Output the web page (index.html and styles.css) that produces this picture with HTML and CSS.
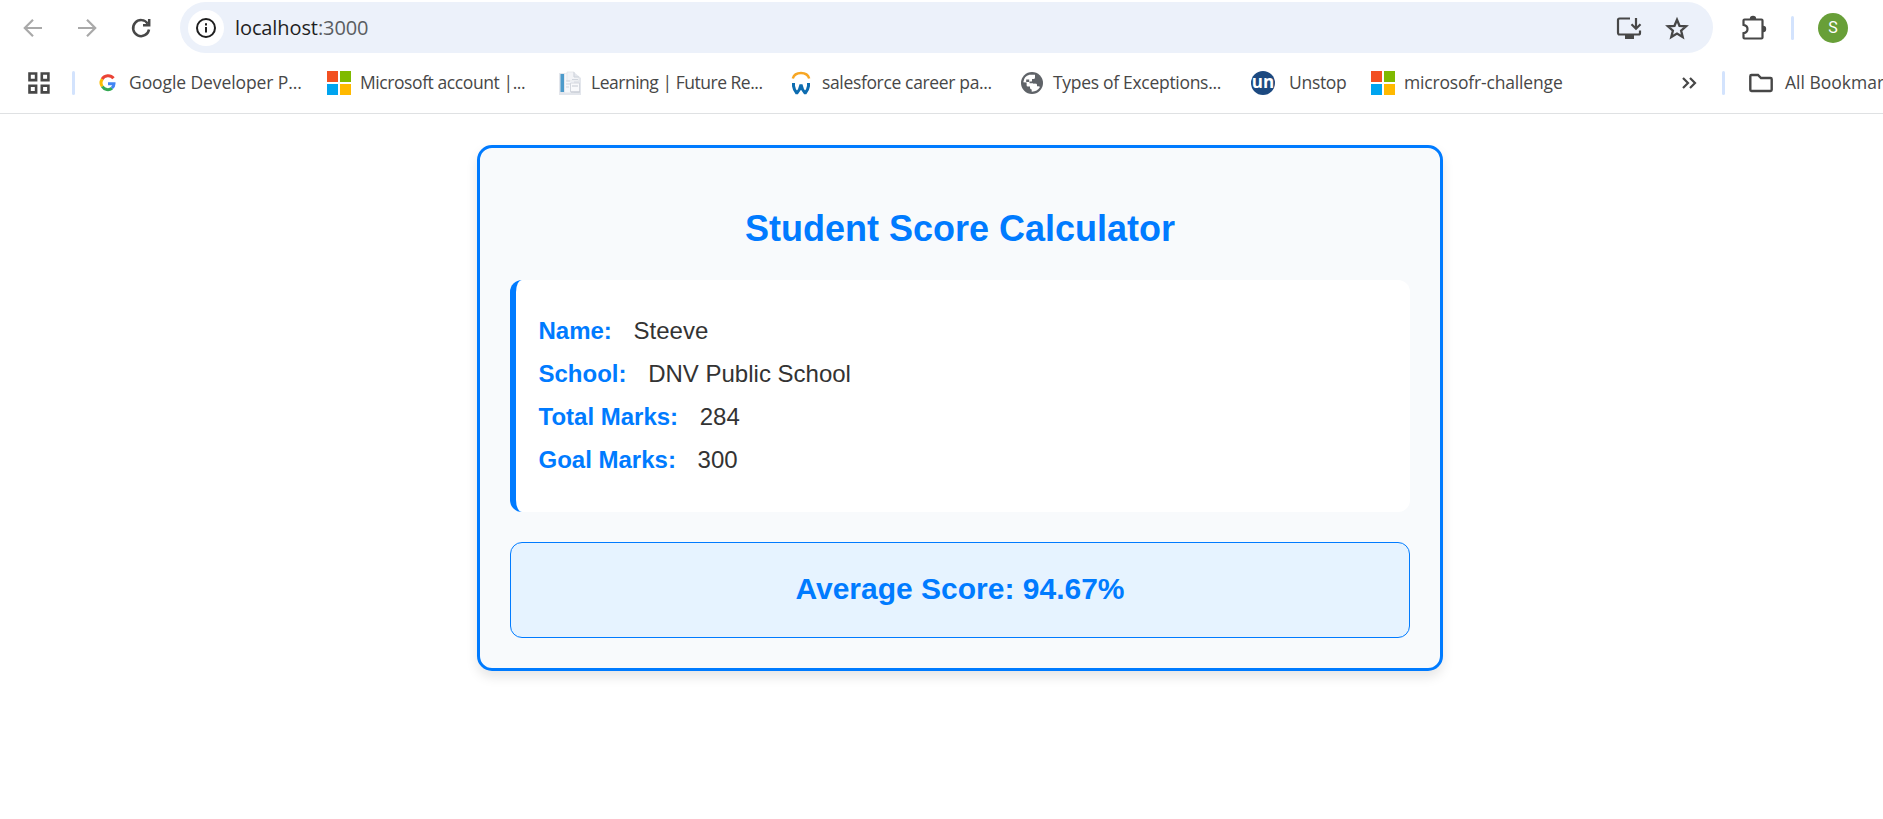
FILE: index.html
```html
<!DOCTYPE html>
<html lang="en">
<head>
<meta charset="utf-8">
<title>Student Score Calculator</title>
<link rel="stylesheet" href="styles.css">
</head>
<body>
<header class="browser">
  <div class="toolbar">
    <svg class="nav-icon nav-off" viewBox="0 0 24 24"><path d="M21 12H4.5M12 3.8 3.8 12l8.200 8.200"/></svg>
    <svg class="nav-icon nav-off" viewBox="0 0 24 24"><path d="M3 12h16.500M12 3.800 20.200 12 12 20.200"/></svg>
    <svg class="nav-icon nav-on" viewBox="0 0 24 24"><path d="M18.800 7.700A8 8 0 1 0 20 13.500"/><path d="M20.200 3v6.200h-6.200"/></svg>
    <div class="omnibox">
      <span class="site-info"><svg width="20" height="20" viewBox="0 0 20 20"><circle cx="10" cy="10" r="9" fill="none" stroke="#1f1f1f" stroke-width="2"/><path d="M10 9v5.500M10 5.200v2.200" stroke="#1f1f1f" stroke-width="2"/></svg></span>
      <span class="url">localhost<span class="port">:3000</span></span>
      <svg class="install" width="26" height="24" viewBox="0 0 26 24" fill="none" stroke="#474747" stroke-width="2.200"><path d="M14 2.500H3.500Q2 2.500 2 4v12.500Q2 18.500 3.500 18.500h19q1.500 0 1.500-1.500v-2.500"/><path d="M9 21h9" stroke-width="4"/><path d="M20 2v10.500M15.500 8.200l4.500 4.500 4.500-4.500"/></svg>
      <svg class="star" width="24" height="24" viewBox="0 0 24 24" fill="none" stroke="#474747" stroke-width="2.300"><path d="m12 3.700 2.500 6.100 6.600.5-5 4.300 1.600 6.500L12 17.600l-5.700 3.500 1.600-6.500-5-4.300 6.600-.5z"/></svg>
    </div>
    <svg class="puzzle" width="26" height="26" viewBox="0 0 26 26"><path d="M3.500 4.500h17q1 0 1 1v17q0 1-1 1h-17q-1 0-1-1v-4.300q4-.7 4-4.200t-4-4.200V5.500q0-1 1-1z" fill="none" stroke="#474747" stroke-width="2.200"/><path d="M8.800 4a3.200 3.200 0 0 1 6.400 0zM22 10.800a3.200 3.200 0 0 1 0 6.400z" fill="#474747"/></svg>
    <i class="divider div-top"></i>
    <span class="avatar">S</span>
  </div>
  <nav class="bookmarks">
    <svg class="apps" width="24" height="24" viewBox="0 0 24 24" fill="none" stroke="#474747" stroke-width="2.600"><path d="M2.500 2.500h6.600v6.600H2.500zM14.800 2.500h6.600v6.600h-6.600zM2.500 14.800h6.600v6.600H2.500zM14.800 14.800h6.600v6.600h-6.600z"/></svg>
    <i class="divider div-apps"></i>
    <a class="bookmark b-google"><svg viewBox="0 0 24 24" fill="none" stroke-width="3"><path d="M18.500 7.300A7 7 0 0 0 7 8.200" stroke="#ea4335"/><path d="M7.300 8.200a6.300 6.300 0 0 0 0 7.300" stroke="#fbbc04"/><path d="M7.300 15.500a6.600 6.600 0 0 0 9.700 1.700" stroke="#34a853"/><path d="M16.800 17.200q2.200-1.800 2.200-4.500h-6" stroke="#4285f4"/></svg><span>Google Developer P...</span></a>
    <a class="bookmark b-ms"><svg viewBox="0 0 24 24"><path fill="#f25022" d="M0 0h11v11H0z"/><path fill="#7fba00" d="M13 0h11v11H13z"/><path fill="#00a4ef" d="M0 13h11v11H0z"/><path fill="#ffb900" d="M13 13h11v11H13z"/></svg><span>Microsoft account |...</span></a>
    <a class="bookmark b-learning"><svg viewBox="0 0 24 24"><path d="M1 2h16l6 5v17H1z" fill="#e3e6ec"/><path d="M2.500 3H6v18H2.500z" fill="#4c9bcb"/><path d="M7 2.500h9v19H7z" fill="#f6f8fb"/><path d="M9 1h7v5h5v4H9z" fill="#f3f4f7" stroke="#dfe2e7" stroke-width=".7"/><path d="M16 1v5h5M8 10h4M8 13h4M8 16h3M14 8.500h6" stroke="#d0d5dd" fill="none"/><path d="M12.500 12h9v9h-9z" fill="#f8f9fb" stroke="#d3d7de"/><path d="M14 15h6M13 21h9" stroke="#c4c9d2"/></svg><span>Learning | Future Re...</span></a>
    <a class="bookmark b-sales"><svg viewBox="0 0 24 24" fill="none"><path d="M3.800 7.500C6 .2 18 .2 20.200 7.500" stroke="#f7a623" stroke-width="2.500"/><path d="M4.500 12v3q.5 4 3.300 7.300Q11 19 12 13.500q1 5.500 4.200 8.800 2.800-3.300 3.300-7.300v-3" stroke="#0d6cb0" stroke-width="3" stroke-linejoin="bevel"/></svg><span>salesforce career pa...</span></a>
    <a class="bookmark b-types"><svg viewBox="0 0 24 24"><circle cx="12" cy="12" r="11" fill="#5f6368"/><path fill="#fff" d="M3.300 11.200Q4 5 9.500 3.700L15 3.800v2.700q0 1.500-1.500 1.500H12v1.700q0 .9-1 .9H9.500v1.700h6q1.500 0 1.500 1.500v1.500h1.500q1 0 1.500.8-2.800 4.700-8.300 4.600v-2.200q-1.700 0-1.700-1.700v-1.300H7.800q-1.200 0-1.200-1.300v-2.700z"/><path fill="#5f6368" d="M6.200 8.500h3V11h-3zM13 10.300h4.500v2.200H13z"/></svg><span>Types of Exceptions...</span></a>
    <a class="bookmark b-unstop"><b class="un">un</b><span>Unstop</span></a>
    <a class="bookmark b-challenge"><svg viewBox="0 0 24 24"><path fill="#f25022" d="M0 0h11v11H0z"/><path fill="#7fba00" d="M13 0h11v11H13z"/><path fill="#00a4ef" d="M0 13h11v11H0z"/><path fill="#ffb900" d="M13 13h11v11H13z"/></svg><span>microsofr-challenge</span></a>
    <svg class="more" width="16" height="14" viewBox="0 0 16 14" fill="none" stroke="#474747" stroke-width="2.200"><path d="m2 2 5 5-5 5M9 2l5 5-5 5"/></svg>
    <i class="divider div-all"></i>
    <a class="bookmark b-all"><svg viewBox="0 0 24 24" fill="none" stroke="#474747" stroke-width="2.400"><path d="M2.500 4H9l3 3h9.500q1.200 0 1.200 1.200v10.600q0 1.200-1.200 1.200h-19q-1.200 0-1.200-1.200V5.200Q1.300 4 2.500 4z"/></svg><span>All Bookmar</span></a>
  </nav>
</header>
<main class="card">
  <h1 class="title">Student Score Calculator</h1>
  <section class="details">
    <p class="row"><b>Name:</b> <span>Steeve</span></p>
    <p class="row"><b>School:</b> <span>DNV Public School</span></p>
    <p class="row"><b>Total Marks:</b> <span>284</span></p>
    <p class="row"><b>Goal Marks:</b> <span>300</span></p>
  </section>
  <section class="average">Average Score: 94.67%</section>
</main>
</body>
</html>
```

FILE: styles.css
```css
* { box-sizing: border-box; }
body {
  margin: 0;
  height: 819px;
  overflow: hidden;
  background: #fff;
  font-family: "Liberation Sans", Arial, sans-serif;
}
svg { display: block; flex: none; }

/* Browser chrome */
.browser {
  height: 114px;
  border-bottom: 1px solid #dfe1e3;
  font-family: "Open Sans", "Noto Sans", sans-serif;
  color: #474747;
  overflow: hidden;
}
.toolbar {
  display: flex;
  align-items: center;
  height: 55px;
  padding-left: 21px;
}
.nav-icon {
  width: 24px;
  height: 24px;
  margin-right: 30px;
  fill: none;
  stroke-width: 2.200;
}
.nav-off { stroke: #a9a9a9; }
.nav-on { stroke: #474747; stroke-width: 2.500; }
.omnibox {
  display: flex;
  align-items: center;
  flex: none;
  width: 1533px;
  height: 51px;
  margin-left: -3px;
  padding-left: 8px;
  border-radius: 26px;
  background: #ecf1fa;
}
.site-info {
  display: grid;
  place-items: center;
  width: 36px;
  height: 36px;
  border-radius: 50%;
  background: #fff;
}
.url {
  margin-left: 11px;
  font-size: 20px;
  line-height: 28px;
  letter-spacing: -0.1px;
  color: #1f1f1f;
}
.port { color: #5a5d61; }
.install { margin-left: auto; }
.star { margin: 0 24px 0 23px; }
.puzzle { margin-left: 28px; }
.divider {
  flex: none;
  width: 3px;
  height: 24px;
  border-radius: 2px;
  background: #d3e3fd;
}
.div-top { margin-left: 24px; }
.avatar {
  width: 30px;
  height: 30px;
  margin-left: 24px;
  border-radius: 50%;
  background: #689f38;
  color: #fff;
  font: 16px/30px Roboto, sans-serif;
  text-align: center;
}
.bookmarks {
  display: flex;
  align-items: center;
  height: 56px;
  padding-left: 27px;
}
.div-apps { margin: 0 20px 0 21px; }
.bookmark {
  display: flex;
  align-items: center;
  gap: 9px;
  flex: none;
  width: 231px;
  font-size: 17.500px;
  line-height: 24px;
  letter-spacing: -0.3px;
  white-space: nowrap;
}
.bookmark svg { width: 24px; height: 24px; }
.bookmark span { margin: -1px 0 1px; }
.b-google { width: 232px; gap: 10px; letter-spacing: -0.090px; }
.b-ms { letter-spacing: -0.420px; }
.b-learning { letter-spacing: -0.480px; }
.b-sales { letter-spacing: -0.350px; }
.b-unstop { width: 120px; gap: 14px; }
.b-challenge { width: 310px; letter-spacing: -0.170px; }
.b-all { width: auto; gap: 12px; letter-spacing: 0; }
.un {
  width: 24px;
  height: 24px;
  border-radius: 50%;
  background: #1c4980;
  color: #fff;
  font: bold 17px/21px "Open Sans", sans-serif;
  letter-spacing: 0;
  text-align: center;
}
.div-all { margin: 0 24px 0 25px; }

/* Score card */
.card {
  width: 966px;
  height: 526px;
  margin: 31px 0 0 477px;
  padding: 30px;
  border: 3px solid #007bff;
  border-radius: 15px;
  background: #f8fafc;
  box-shadow: 0 6px 12px rgba(0, 0, 0, 0.1);
}
.title {
  margin: 30px 0;
  font-size: 36px;
  line-height: 42px;
  text-align: center;
  color: #007bff;
}
.details {
  height: 232px;
  padding: 29px 22.500px;
  border-left: 6px solid #007bff;
  border-radius: 12px;
  background: #fff;
}
.row {
  margin: 0;
  font-size: 24px;
  line-height: 43px;
  color: #333;
}
.row b { margin-right: 15px; color: #007bff; }
.average {
  height: 96px;
  margin-top: 30px;
  border: 1px solid #007bff;
  border-radius: 12px;
  background: #e6f3ff;
  color: #007bff;
  font-size: 30px;
  font-weight: bold;
  line-height: 92px;
  text-align: center;
}
```
